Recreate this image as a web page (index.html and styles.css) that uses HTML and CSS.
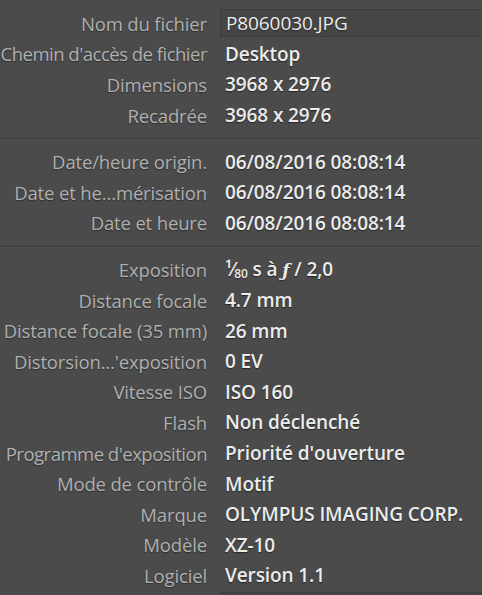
FILE: index.html
```html
<!DOCTYPE html>
<html lang="fr">
<head>
  <meta charset="UTF-8">
  <title>Métadonnées</title>
  <link rel="stylesheet" href="styles.css">
</head>
<body>
  <div class="meta-panel">
    <div class="meta-section first">
      <div class="meta-row">
        <span class="meta-label">Nom du fichier</span>
        <span class="meta-value field">P8060030.JPG</span>
      </div>
      <div class="meta-row">
        <span class="meta-label tight">Chemin d'accès de fichier</span>
        <span class="meta-value">Desktop</span>
      </div>
      <div class="meta-row">
        <span class="meta-label">Dimensions</span>
        <span class="meta-value">3968 x 2976</span>
      </div>
      <div class="meta-row">
        <span class="meta-label">Recadrée</span>
        <span class="meta-value">3968 x 2976</span>
      </div>
    </div>

    <div class="meta-section">
      <div class="meta-row">
        <span class="meta-label">Date/heure origin.</span>
        <span class="meta-value">06/08/2016 08:08:14</span>
      </div>
      <div class="meta-row">
        <span class="meta-label">Date et he…mérisation</span>
        <span class="meta-value">06/08/2016 08:08:14</span>
      </div>
      <div class="meta-row">
        <span class="meta-label">Date et heure</span>
        <span class="meta-value">06/08/2016 08:08:14</span>
      </div>
    </div>

    <div class="meta-section">
      <div class="meta-row">
        <span class="meta-label">Exposition</span>
        <span class="meta-value">¹⁄<sub>80</sub> s à <i>ƒ</i> / 2,0</span>
      </div>
      <div class="meta-row">
        <span class="meta-label">Distance focale</span>
        <span class="meta-value">4.7 mm</span>
      </div>
      <div class="meta-row">
        <span class="meta-label">Distance focale (35 mm)</span>
        <span class="meta-value">26 mm</span>
      </div>
      <div class="meta-row">
        <span class="meta-label">Distorsion…'exposition</span>
        <span class="meta-value">0 EV</span>
      </div>
      <div class="meta-row">
        <span class="meta-label">Vitesse ISO</span>
        <span class="meta-value">ISO 160</span>
      </div>
      <div class="meta-row">
        <span class="meta-label">Flash</span>
        <span class="meta-value">Non déclenché</span>
      </div>
      <div class="meta-row">
        <span class="meta-label tight">Programme d'exposition</span>
        <span class="meta-value">Priorité d'ouverture</span>
      </div>
      <div class="meta-row">
        <span class="meta-label">Mode de contrôle</span>
        <span class="meta-value">Motif</span>
      </div>
      <div class="meta-row">
        <span class="meta-label">Marque</span>
        <span class="meta-value">OLYMPUS IMAGING CORP.</span>
      </div>
      <div class="meta-row">
        <span class="meta-label">Modèle</span>
        <span class="meta-value">XZ-10</span>
      </div>
      <div class="meta-row">
        <span class="meta-label">Logiciel</span>
        <span class="meta-value">Version 1.1</span>
      </div>
      <div class="meta-row">
        <span class="meta-label"></span>
        <span class="meta-value field"></span>
      </div>
    </div>
  </div>
</body>
</html>
```

FILE: styles.css
```css
body {
  margin: 0;
  background-color: #4b4b4b;
  font-family: 'Open Sans', 'Lato', sans-serif;
  font-size: 18.5px;
  overflow: hidden;
}
.meta-panel {
  width: 482px;
  height: 595px;
  overflow: hidden;
}
.meta-section {
  padding: 7px 0 8px;
  border-top: 1px solid #3c3c3c;
  box-shadow: inset 0 1px 0 #525252;
}
.meta-section.first {
  padding-top: 8px;
  border-top: none;
  box-shadow: none;
}
.meta-row {
  display: grid;
  grid-template-columns: 207px 1fr;
  column-gap: 13px;
  align-items: center;
  height: 30.6px;
}
.meta-label {
  text-align: right;
  color: #b0b0b0;
  white-space: nowrap;
  text-shadow: 0 1px 1px #2e2e2e;
  letter-spacing: -0.15px;
}
.meta-label.tight {
  letter-spacing: -0.5px;
}
.meta-value {
  color: #ececec;
  font-weight: 600;
  font-size: 19px;
  white-space: nowrap;
  padding-left: 5px;
  letter-spacing: -0.1px;
  text-shadow: 0 1px 1px #262626;
}
.meta-value.field {
  height: 26px;
  line-height: 26px;
  font-weight: 400;
  background-color: #464646;
  border: 1px solid #3c3c3c;
  border-right: none;
}
.meta-value sub {
  font-size: 12px;
  vertical-align: -2px;
}
.meta-value i {
  font-family: 'DejaVu Serif', serif;
  font-size: 17px;
}
```
